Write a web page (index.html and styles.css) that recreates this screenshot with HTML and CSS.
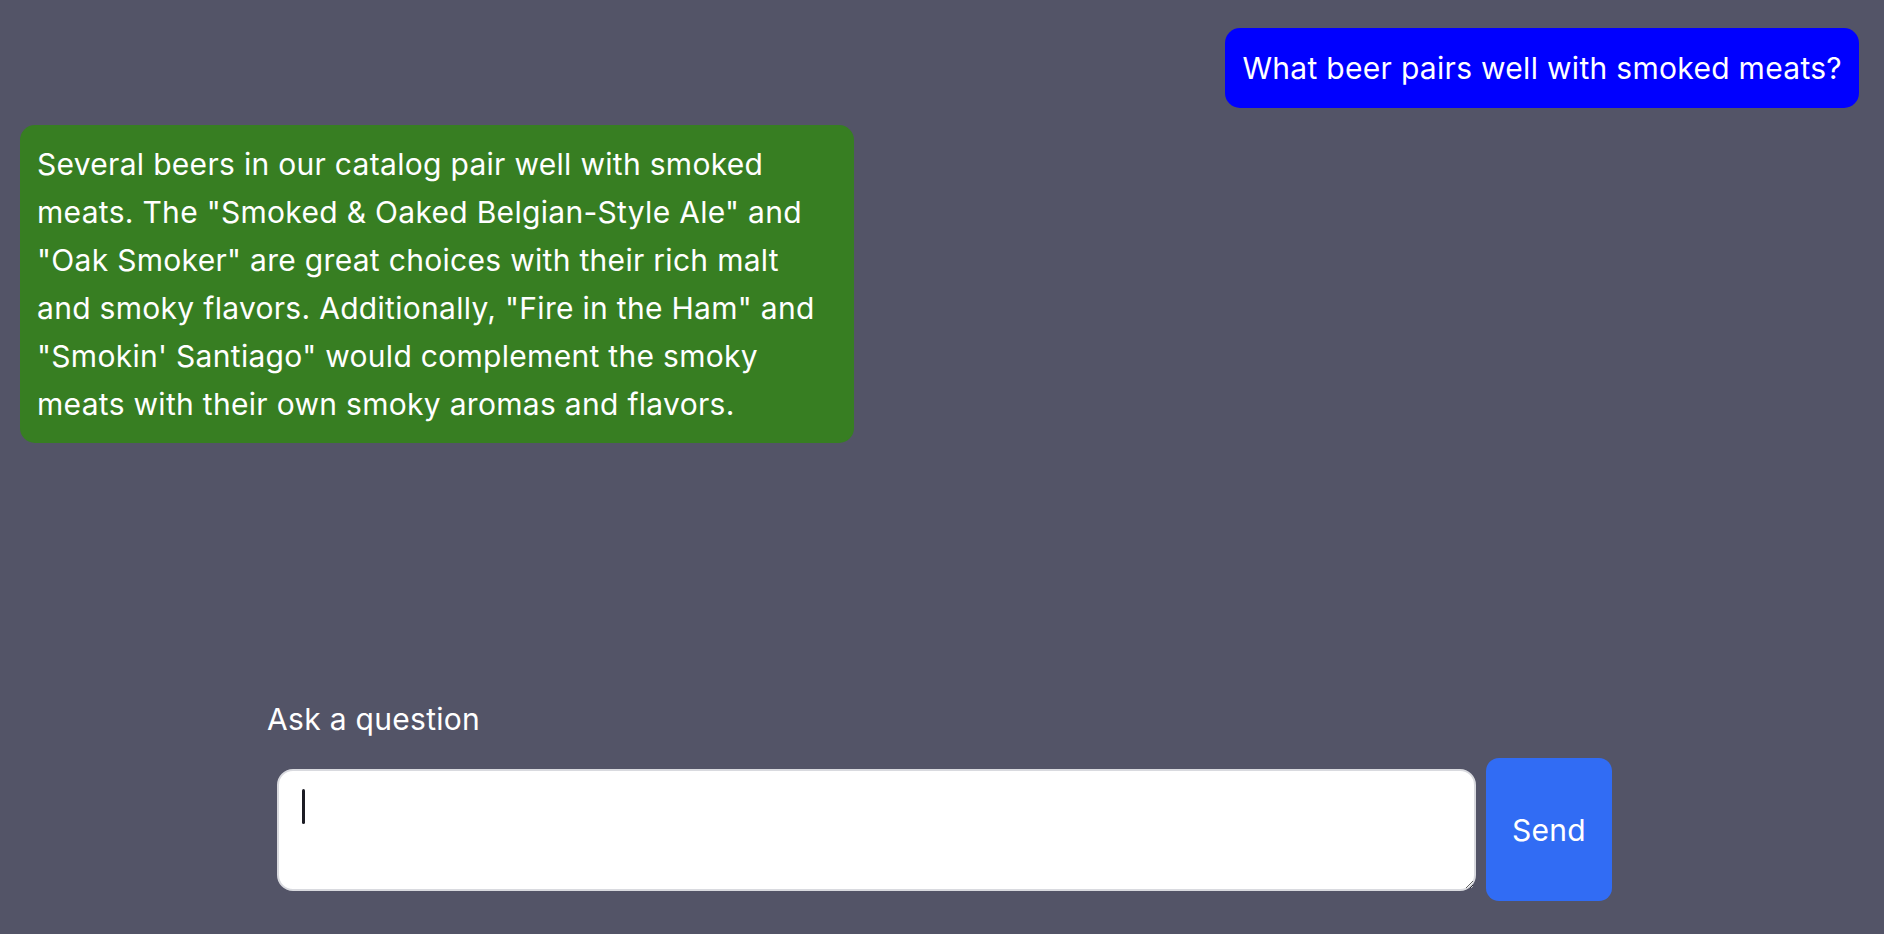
FILE: index.html
```html
<!DOCTYPE html>
<html lang="en">
<head>
<meta charset="utf-8">
<title>Beer Chat</title>
<link rel="stylesheet" href="styles.css">
</head>
<body>
<div class="page">
  <div class="messages">
    <div class="msg msg-user">What beer pairs well with smoked meats?</div>
    <div class="msg msg-bot">Several beers in our catalog pair well with smoked meats. The "Smoked &amp; Oaked Belgian-Style Ale" and "Oak Smoker" are great choices with their rich malt and smoky flavors. Additionally, "Fire in the Ham" and "Smokin' Santiago" would complement the smoky meats with their own smoky aromas and flavors.</div>
  </div>
  <form class="ask">
    <label class="ask-label" for="q">Ask a question</label>
    <div class="ask-row">
      <div class="field">
        <textarea id="q" class="input"></textarea>
        <span class="caret"></span>
      </div>
      <button type="button" class="send">Send</button>
    </div>
  </form>
</div>
</body>
</html>
```

FILE: styles.css
```css
* { box-sizing: border-box; }
html, body { margin: 0; padding: 0; }
body {
  background: #535467;
  font-family: Inter, "Noto Sans", sans-serif;
  font-size: 30px;
  line-height: 48px;
  letter-spacing: 0.3px;
  color: #ffffff;
}
.page {
  height: 100vh;
  display: flex;
  flex-direction: column;
}
.messages {
  flex: 1;
  display: flex;
  flex-direction: column;
  gap: 17px;
  padding: 28px 25px 0 20px;
}
.msg {
  padding: 15px 17px;
  border-radius: 15px;
}
.msg-user {
  align-self: flex-end;
  background: #0000ff;
  padding-top: 16px;
  padding-bottom: 16px;
}
.msg-bot {
  align-self: flex-start;
  background: #377e22;
  max-width: 834px;
}
.ask {
  width: 1345px;
  margin: 0 0 0 267px;
  padding-bottom: 33px;
  display: flex;
  flex-direction: column;
  gap: 15px;
}
.ask-label {
  display: block;
  line-height: 48px;
}
.ask-row {
  display: flex;
  align-items: center;
}
.field {
  flex: 1;
  margin: 10px;
  position: relative;
  height: 122px;
}
.input {
  display: block;
  width: 100%;
  height: 122px;
  border: 2px solid #d9dadf;
  border-radius: 16px;
  background: #ffffff;
  padding: 18px 24px;
  font-family: inherit;
  font-size: 30px;
  line-height: 36px;
  color: #1f2937;
  outline: none;
  resize: vertical;
}
.caret {
  position: absolute;
  left: 25px;
  top: 20px;
  width: 3px;
  height: 35px;
  border-radius: 2px;
  background: #1c1c24;
}
.send {
  width: 126px;
  height: 143px;
  border: none;
  border-radius: 13px;
  background: #316cf4;
  color: #ffffff;
  font-family: inherit;
  font-size: 30px;
  letter-spacing: 0.3px;
  padding: 0;
  cursor: pointer;
}
```
